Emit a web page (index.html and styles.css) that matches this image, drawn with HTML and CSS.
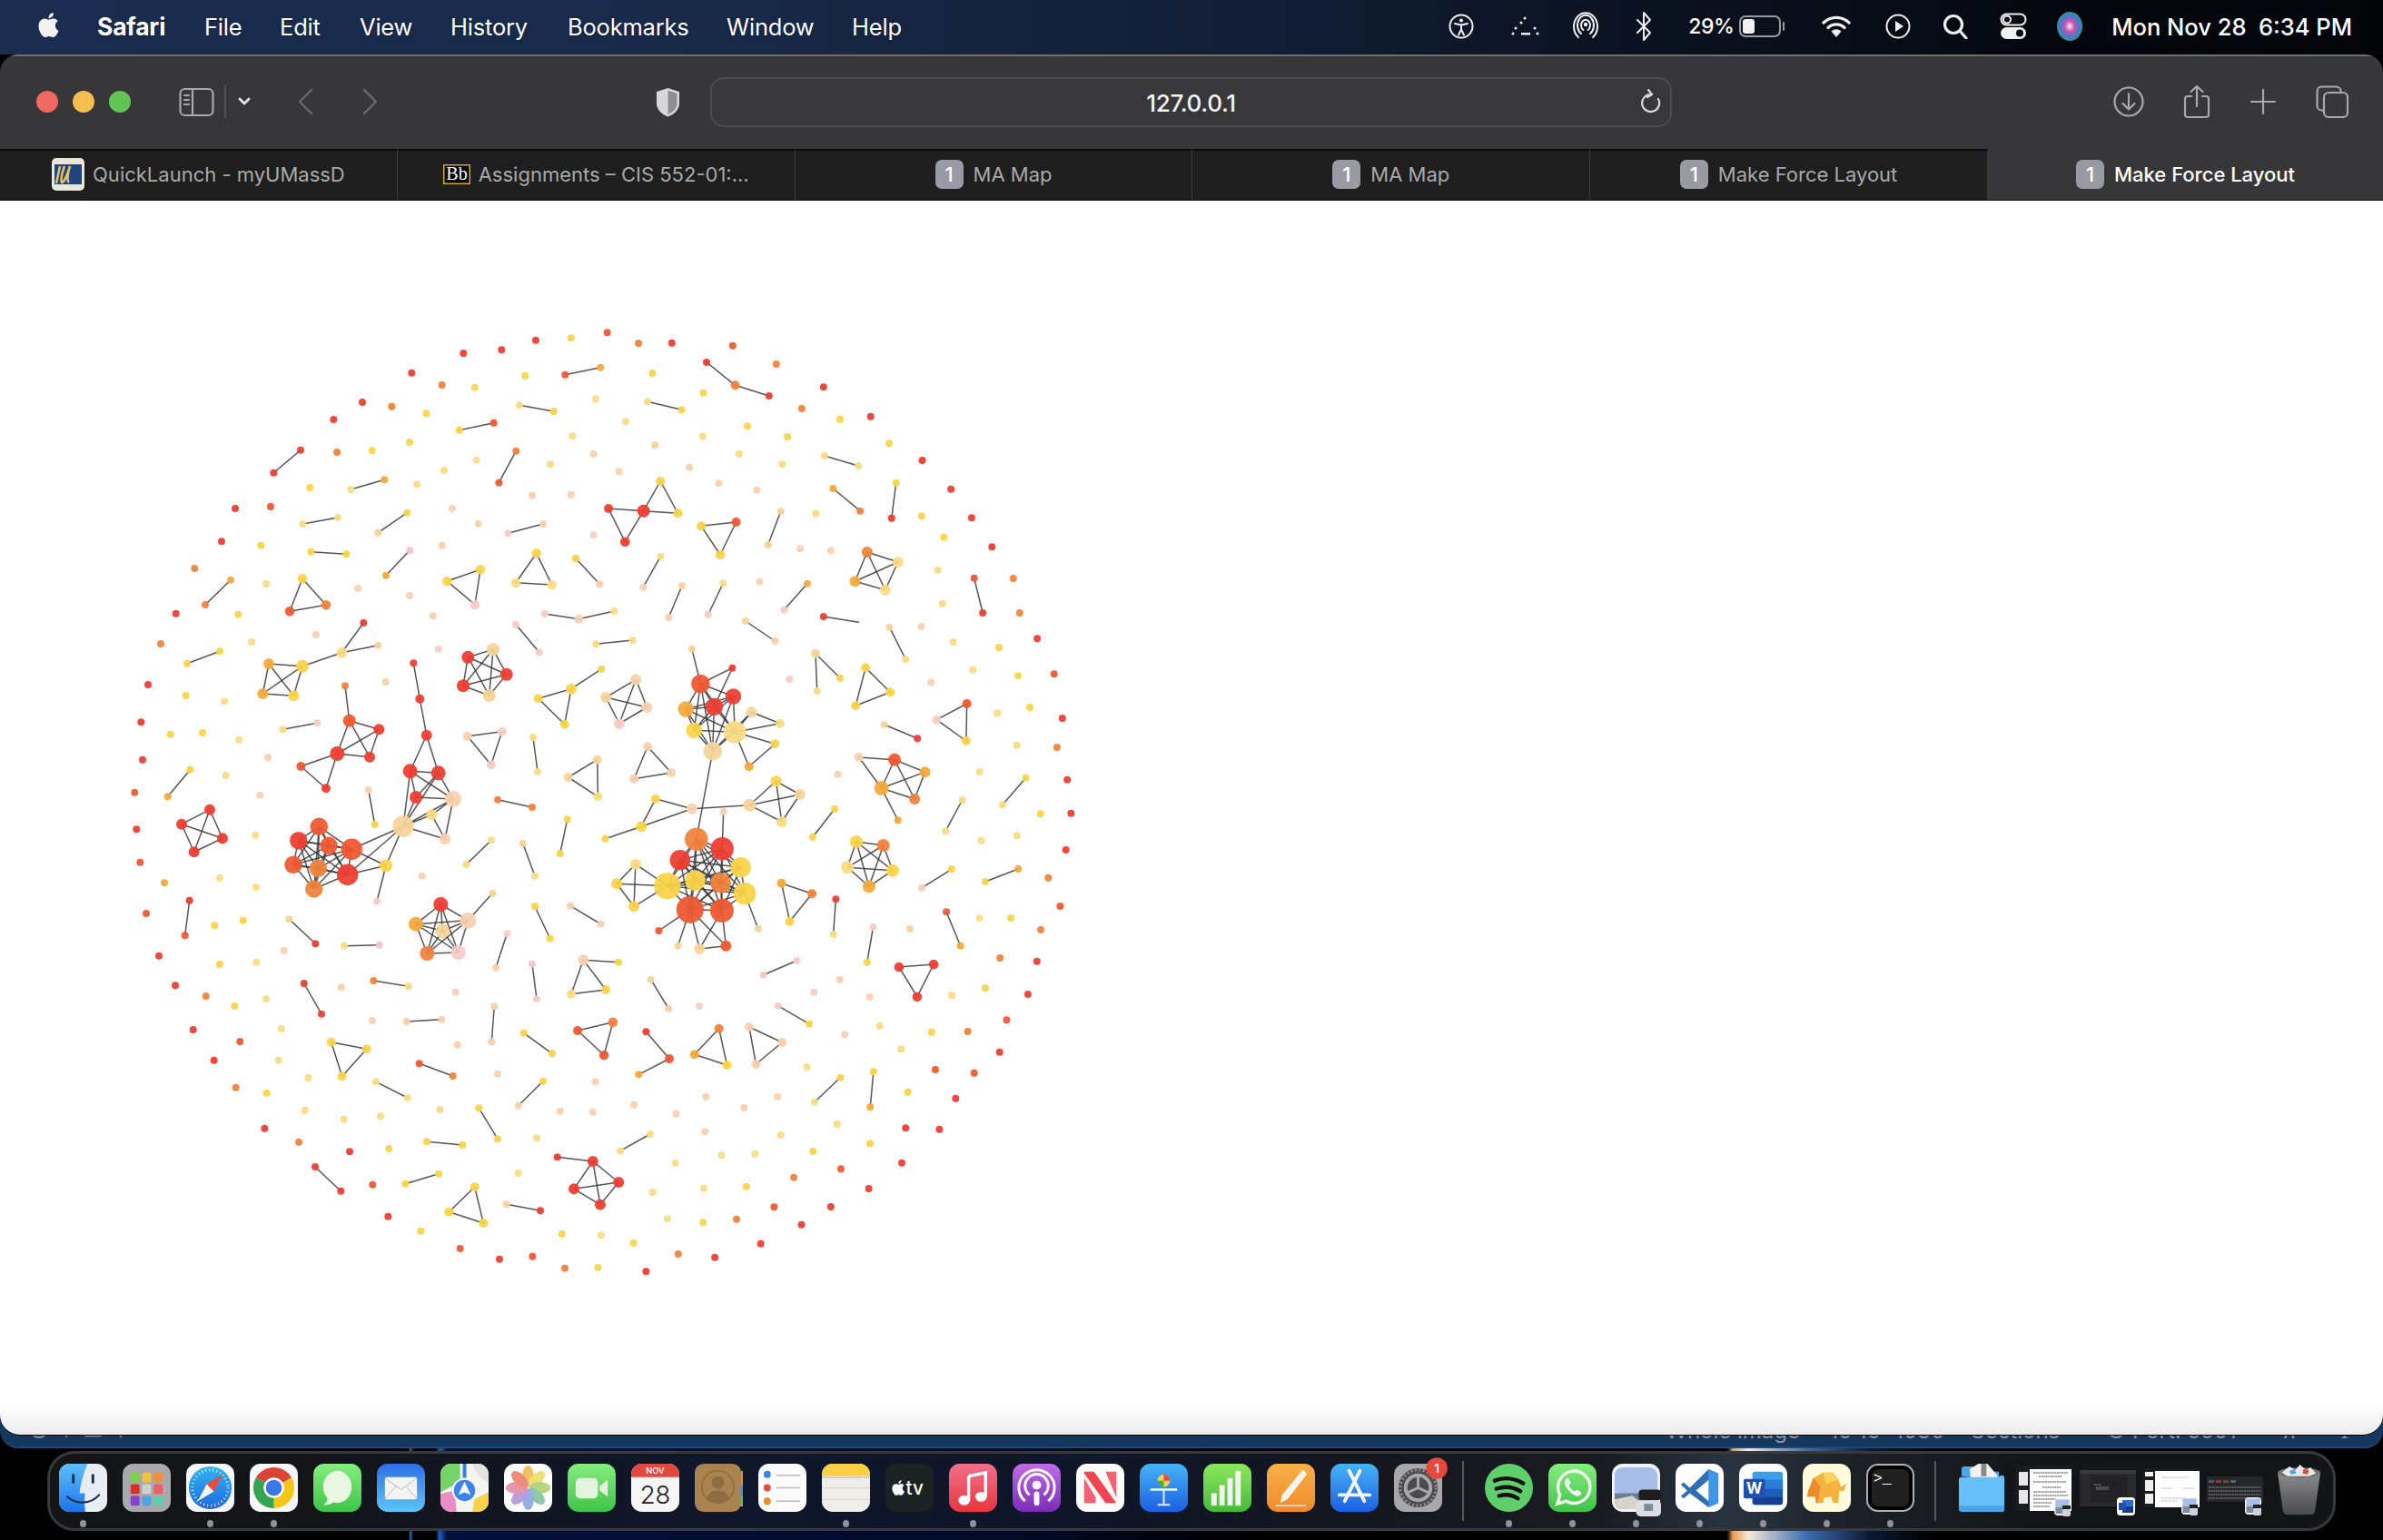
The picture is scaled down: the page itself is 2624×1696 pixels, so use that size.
FILE: index.html
```html
<!DOCTYPE html>
<html lang="en">
<head>
<meta charset="utf-8">
<title>Make Force Layout</title>
<link rel="stylesheet" href="styles.css">
</head>
<body>
<svg class="defs" aria-hidden="true">
  <defs>
    <linearGradient id="gFinder" x1="0" y1="0" x2="0" y2="1"><stop offset="0" stop-color="#5cc0fa"/><stop offset="1" stop-color="#1f74ea"/></linearGradient>
    <linearGradient id="gGreen" x1="0" y1="0" x2="0" y2="1"><stop offset="0" stop-color="#84ef7e"/><stop offset="1" stop-color="#3fc348"/></linearGradient>
    <linearGradient id="gMail" x1="0" y1="0" x2="0" y2="1"><stop offset="0" stop-color="#2f6fe6"/><stop offset="1" stop-color="#5cc6f8"/></linearGradient>
    <linearGradient id="gSafari" x1="0" y1="0" x2="0" y2="1"><stop offset="0" stop-color="#2fb6f2"/><stop offset="1" stop-color="#2168dc"/></linearGradient>
    <linearGradient id="gMusic" x1="0" y1="0" x2="0" y2="1"><stop offset="0" stop-color="#f2708a"/><stop offset="1" stop-color="#e8363f"/></linearGradient>
    <linearGradient id="gPod" x1="0" y1="0" x2="0" y2="1"><stop offset="0" stop-color="#c26bea"/><stop offset="1" stop-color="#7a2cb8"/></linearGradient>
    <linearGradient id="gBlue" x1="0" y1="0" x2="0" y2="1"><stop offset="0" stop-color="#45b4f8"/><stop offset="1" stop-color="#1c5fe0"/></linearGradient>
    <linearGradient id="gNum" x1="0" y1="0" x2="0" y2="1"><stop offset="0" stop-color="#8ce85c"/><stop offset="1" stop-color="#48b83a"/></linearGradient>
    <linearGradient id="gPages" x1="0" y1="0" x2="0" y2="1"><stop offset="0" stop-color="#f8b048"/><stop offset="1" stop-color="#f08a2a"/></linearGradient>
    <linearGradient id="gTrash" x1="0" y1="0" x2="0" y2="1"><stop offset="0" stop-color="#8c8c8e"/><stop offset="1" stop-color="#4a4a4c"/></linearGradient>
    <radialGradient id="gSiri" cx=".5" cy=".5" r=".55"><stop offset="0" stop-color="#f4f0ff"/><stop offset=".35" stop-color="#d04fa8"/><stop offset=".7" stop-color="#3b7fd0"/><stop offset="1" stop-color="#35a070"/></radialGradient>
    <symbol id="miniPrev" viewBox="0 0 20 20">
      <rect x="1" y="0" width="18" height="19" rx="4" fill="#f2f2f2"/>
      <rect x="2.500" y="1.500" width="15" height="12" fill="#a9bfe8"/>
      <rect x="2.500" y="10" width="15" height="7" fill="#7d8b9c"/>
      <rect x="10" y="8" width="9" height="4" fill="#222"/>
      <rect x="10" y="12" width="9" height="8" rx="2" fill="#cfd3d8"/>
    </symbol>
    <symbol id="miniWord" viewBox="0 0 20 20">
      <rect x="0" y="0" width="20" height="20" rx="4" fill="#fff"/>
      <rect x="6" y="3" width="12" height="14" fill="#2a6dd0"/>
      <rect x="6" y="10" width="12" height="7" fill="#17398f"/>
      <rect x="2" y="6" width="8" height="8" fill="#1f4fb0"/>
    </symbol>
  </defs>
</svg>

<header class="menubar">
  <nav class="menu">
    <svg class="apple" viewBox="0 0 24 24"><path d="M12.152 6.896c-.948 0-2.415-1.078-3.96-1.04-2.04.027-3.91 1.183-4.961 3.014-2.117 3.675-.546 9.103 1.519 12.09 1.013 1.454 2.208 3.09 3.792 3.039 1.52-.065 2.09-.987 3.935-.987 1.831 0 2.35.987 3.96.948 1.637-.026 2.676-1.48 3.676-2.948 1.156-1.688 1.636-3.325 1.662-3.415-.039-.013-3.182-1.221-3.22-4.857-.026-3.04 2.48-4.494 2.597-4.559-1.429-2.09-3.623-2.324-4.39-2.376-2-.156-3.675 1.09-4.61 1.09zM15.53 3.83c.843-1.012 1.4-2.427 1.245-3.83-1.207.052-2.662.805-3.532 1.818-.78.896-1.454 2.338-1.273 3.714 1.338.104 2.715-.688 3.559-1.701"/></svg>
    <b class="app">Safari</b><span>File</span><span>Edit</span><span>View</span><span>History</span><span>Bookmarks</span><span>Window</span><span>Help</span>
  </nav>
  <div class="status">
    <svg class="si" width="28" height="28" viewBox="0 0 28 28"><circle cx="14" cy="14" r="12.500"/><circle class="f" cx="14" cy="7.500" r="2"/><path d="M7 11l7 1.500 7-1.500M14 12.500v5l-3 6M14 17.500l3 6"/></svg>
    <svg class="si" width="34" height="24" viewBox="0 0 34 24"><g class="f"><circle cx="17" cy="3" r="1.500"/><circle cx="13" cy="8" r="1.500"/><circle cx="7" cy="14" r="1.500"/><circle cx="28" cy="14" r="1.500"/><circle cx="4" cy="20" r="1.500"/><circle cx="31" cy="20" r="1.500"/><rect x="13" y="19" width="10" height="2.500"/></g></svg>
    <svg class="si" width="30" height="34" viewBox="0 0 30 34"><path d="M7 29a13 15 0 1 1 16 0M10 25a9 11 0 1 1 10 0M12.500 21a5 6 0 1 1 5 0"/><circle class="f" cx="15" cy="15" r="2.200"/></svg>
    <svg class="si" width="18" height="34" viewBox="0 0 18 34"><path d="M2 10l14 14-7 8V2l7 8-14 14"/></svg>
    <span class="pct">29%</span>
    <svg class="si" width="52" height="24" viewBox="0 0 52 24"><rect class="dim" x="1" y="1" width="44" height="22" rx="6"/><rect class="f" x="4" y="4" width="13" height="16" rx="3"/><path class="dim" d="M49 8v8"/></svg>
    <svg class="si" width="34" height="28" viewBox="0 0 34 28"><path class="thick" d="M3 10a20 20 0 0 1 28 0M8 15.500a13 13 0 0 1 18 0"/><path class="f" d="M11.500 19.500a8 8 0 0 1 11 0L17 26z"/></svg>
    <svg class="si" width="28" height="28" viewBox="0 0 28 28"><circle cx="14" cy="14" r="12.500"/><path class="f" d="M11 8l9 6-9 6z"/></svg>
    <svg class="si" width="28" height="28" viewBox="0 0 28 28"><circle class="thick" cx="12" cy="12" r="9.500"/><path class="thick" d="M19 19l7 8"/></svg>
    <svg class="si" width="30" height="30" viewBox="0 0 30 30"><rect class="dim2" x="1.500" y="1.500" width="27" height="12" rx="6"/><circle cx="8" cy="7.500" r="4"/><rect class="f" x="1" y="16" width="28" height="13" rx="6.500"/><circle class="hole" cx="22" cy="22.500" r="4"/></svg>
    <svg class="siri" width="28" height="32" viewBox="0 0 28 32"><ellipse cx="14" cy="16" rx="14" ry="16" fill="url(#gSiri)"/></svg>
    <span class="clock">Mon Nov 28&nbsp;&nbsp;6:34 PM</span>
  </div>
</header>

<div class="window">
  <div class="toolbar">
    <div class="lights"><i class="red"></i><i class="amber"></i><i class="green"></i></div>
    <svg class="tb" width="54" height="36" viewBox="0 0 54 36"><rect x="1.500" y="4" width="36" height="29" rx="5"/><path d="M15 4v29M6 11h5M6 16h5M6 21h5"/><path class="thin" d="M51 0v36"/></svg>
    <svg class="tb" width="14" height="10" viewBox="0 0 14 10"><path class="bright" d="M2 2l5 5 5-5"/></svg>
    <svg class="tb faint" width="20" height="30" viewBox="0 0 20 30"><path d="M17 2L4 15l13 13"/></svg>
    <svg class="tb faint" width="20" height="30" viewBox="0 0 20 30"><path d="M3 2l13 13L3 28"/></svg>
    <svg class="shield" width="27" height="33" viewBox="0 0 27 33"><path d="M13.500 1L26 5v13c0 7-6 12-12.500 14.500C7 30 1 25 1 18V5z" fill="#d8d8d8"/><path d="M13.500 3.500L23.500 7v11c0 5.500-4.500 9.500-10 12z" fill="#8e8e90"/></svg>
    <div class="url"><span class="addr">127.0.0.1</span><svg class="tb reload" width="24" height="28" viewBox="0 0 24 28"><path d="M13 6a9.500 9.500 0 1 0 8 5M10 1l4 5-5 3"/></svg></div>
    <svg class="tb" width="34" height="34" viewBox="0 0 34 34"><circle cx="17" cy="17" r="15.500"/><path d="M17 8v17M10.500 19l6.500 6.500 6.500-6.500"/></svg>
    <svg class="tb" width="30" height="38" viewBox="0 0 30 38"><path d="M9 13H5a3 3 0 0 0-3 3v17a3 3 0 0 0 3 3h20a3 3 0 0 0 3-3V16a3 3 0 0 0-3-3h-4M15 24V2M8.500 8L15 2l6.500 6"/></svg>
    <svg class="tb" width="28" height="28" viewBox="0 0 28 28"><path d="M14 1v26M1 14h26"/></svg>
    <svg class="tb" width="36" height="36" viewBox="0 0 36 36"><rect x="1.500" y="1.500" width="26" height="26" rx="5"/><rect class="filled" x="9" y="8" width="26" height="27" rx="5"/></svg>
  </div>
  <div class="tabs">
    <div class="tab">
      <svg class="fav" width="36" height="36" viewBox="0 0 36 36"><rect width="36" height="36" rx="5" fill="#eae6d8"/><rect x="3" y="7" width="30" height="22" fill="#1f4480"/><path d="M9 9L5 28M14 9c-2 6-5 14-3 18 2 1 6-8 9-18-2 6-4 16-1 18" fill="none" stroke="#e8c25a" stroke-width="2.500"/></svg>
      <span>QuickLaunch - myUMassD</span>
    </div>
    <div class="tab">
      <svg class="fav" width="30" height="22" viewBox="0 0 30 22"><rect x=".75" y=".75" width="28.500" height="20.500" fill="#000" stroke="#d9a92e" stroke-width="1.500"/><text x="15" y="17" class="bb">Bb</text></svg>
      <span>Assignments – CIS 552-01:...</span>
    </div>
    <div class="tab"><b class="badge">1</b><span>MA Map</span></div>
    <div class="tab"><b class="badge">1</b><span>MA Map</span></div>
    <div class="tab"><b class="badge">1</b><span>Make Force Layout</span></div>
    <div class="tab active"><b class="badge">1</b><span>Make Force Layout</span></div>
  </div>
  <main class="page">
    <svg id="graph" class="graph" width="1300" height="1359" viewBox="0 221 1300 1359"></svg>
  </main>
</div>

<div class="backwin">
  <span class="bw-left">○ ▾ ▭ ▾</span>
  <div class="bw-right">
    <span>Whole image</span><span>16 16x1080</span><span>Sections</span><span>○ Port: 5501</span><span>∧</span><span>♠</span>
  </div>
</div>

<div class="desk">
  <nav class="dock">
    <div class="slot"><svg class="ic" viewBox="0 0 54 54"><rect width="54" height="54" rx="12" fill="#e8edf3"/><path d="M12 0h20c-5 12-8 23-9 33h6c-.5 7-.5 14 .5 21H12A12 12 0 0 1 0 42V12A12 12 0 0 1 12 0z" fill="url(#gFinder)"/><path d="M16 13v8M38 13v8" stroke="#1c2c48" stroke-width="3" stroke-linecap="round"/><path d="M9 37c10 9 26 9 36-2" fill="none" stroke="#1c2c48" stroke-width="2.200" stroke-linecap="round"/></svg><i class="dot"></i></div>
    <div class="slot"><svg class="ic" viewBox="0 0 54 54"><rect width="54" height="54" rx="12" fill="#a9a9ad"/><g><rect x="9" y="10" width="10" height="11" rx="2" fill="#7bd34d"/><rect x="22" y="10" width="10" height="11" rx="2" fill="#f5c33b"/><rect x="35" y="10" width="10" height="11" rx="2" fill="#f0903a"/><rect x="9" y="23" width="10" height="11" rx="2" fill="#d6322b"/><rect x="22" y="23" width="10" height="11" rx="2" fill="#cfcfcf"/><rect x="35" y="23" width="10" height="11" rx="2" fill="#ea5f6d"/><rect x="9" y="36" width="10" height="11" rx="2" fill="#8a3fd0"/><rect x="22" y="36" width="10" height="11" rx="2" fill="#4aa6e8"/><rect x="35" y="36" width="10" height="11" rx="2" fill="#5fd0a8"/></g></svg></div>
    <div class="slot"><svg class="ic" viewBox="0 0 54 54"><rect width="54" height="54" rx="12" fill="#f5f5f5"/><circle cx="27" cy="27" r="24" fill="url(#gSafari)"/><circle cx="27" cy="27" r="20" fill="none" stroke="#dff0fc" stroke-width="3" stroke-dasharray="1 3.200"/><path d="M41 12L23 23l8 8z" fill="#ef4a3a"/><path d="M13 42l10-19 8 8z" fill="#f5f5f5"/></svg><i class="dot"></i></div>
    <div class="slot"><svg class="ic" viewBox="0 0 54 54"><rect width="54" height="54" rx="12" fill="#f7f7f7"/><path d="M27 27L7.100 15.500A23 23 0 0 1 46.900 15.500z" fill="#db4437"/><path d="M27 27L46.900 15.500A23 23 0 0 1 27 50z" fill="#f5c518"/><path d="M27 27L27 50A23 23 0 0 1 7.100 15.500z" fill="#34a450"/><circle cx="27" cy="27" r="11.500" fill="#fff"/><circle cx="27" cy="27" r="9" fill="#3b78e7"/></svg><i class="dot"></i></div>
    <div class="slot"><svg class="ic" viewBox="0 0 54 54"><rect width="54" height="54" rx="12" fill="url(#gGreen)"/><ellipse cx="27" cy="26" rx="16" ry="18" fill="#e8f6e2"/><path d="M16 38c0 4-2 7-5 8 5 1 10-1 13-4z" fill="#e8f6e2"/></svg></div>
    <div class="slot"><svg class="ic" viewBox="0 0 54 54"><rect width="54" height="54" rx="12" fill="url(#gMail)"/><rect x="9" y="15" width="36" height="25" rx="2" fill="#f4f4f4"/><path d="M9 16l18 13 18-13M9 39l13-14M45 39L32 25" fill="none" stroke="#b8b8b8" stroke-width="1"/></svg></div>
    <div class="slot"><svg class="ic" viewBox="0 0 54 54"><rect width="54" height="54" rx="12" fill="#f5f5f0"/><path d="M0 12A12 12 0 0 1 12 0h10v20L0 32z" fill="#74d46a"/><path d="M36 0h6a12 12 0 0 1 12 12v10C44 16 38 10 36 0z" fill="#e4e4e4"/><path d="M0 34l16-4 2 24h-6A12 12 0 0 1 0 42z" fill="#e88ec4"/><path d="M38 40l16-8v10a12 12 0 0 1-12 12h-6z" fill="#f7d24a"/><path d="M27 0v16" stroke="#3a7de0" stroke-width="4"/><circle cx="27" cy="30" r="13" fill="#3d85e8" stroke="#fff" stroke-width="2"/><path d="M27 20l7 15-7-3-7 3z" fill="#fff"/></svg></div>
    <div class="slot"><svg class="ic" viewBox="0 0 54 54"><rect width="54" height="54" rx="12" fill="#fff"/><g class="petals"><ellipse cx="27" cy="14" rx="6.500" ry="12" fill="#f2a72c"/><ellipse cx="27" cy="14" rx="6.500" ry="12" fill="#e9d53a" transform="rotate(45 27 27)"/><ellipse cx="27" cy="14" rx="6.500" ry="12" fill="#9cc64a" transform="rotate(90 27 27)"/><ellipse cx="27" cy="14" rx="6.500" ry="12" fill="#5fb88a" transform="rotate(135 27 27)"/><ellipse cx="27" cy="14" rx="6.500" ry="12" fill="#6f90d8" transform="rotate(180 27 27)"/><ellipse cx="27" cy="14" rx="6.500" ry="12" fill="#9c7cd0" transform="rotate(225 27 27)"/><ellipse cx="27" cy="14" rx="6.500" ry="12" fill="#dc6f8c" transform="rotate(270 27 27)"/><ellipse cx="27" cy="14" rx="6.500" ry="12" fill="#e8624a" transform="rotate(315 27 27)"/></g></svg></div>
    <div class="slot"><svg class="ic" viewBox="0 0 54 54"><rect width="54" height="54" rx="12" fill="url(#gGreen)"/><rect x="9" y="16" width="25" height="23" rx="5" fill="#e6f2e0"/><path d="M36 25l9-7v19l-9-7z" fill="#e6f2e0"/></svg></div>
    <div class="slot"><svg class="ic" viewBox="0 0 54 54"><rect width="54" height="54" rx="12" fill="#f6f6f6"/><path d="M0 15V12A12 12 0 0 1 12 0h30a12 12 0 0 1 12 12v3z" fill="#e2483d"/><text x="27" y="11.500" class="cal-m">NOV</text><text x="27" y="45" class="cal-d">28</text></svg></div>
    <div class="slot"><svg class="ic" viewBox="0 0 54 54"><rect x="48" y="8" width="6" height="40" fill="#5dc46a"/><rect x="48" y="10" width="6" height="14" fill="#eb8b2e"/><rect x="48" y="24" width="6" height="12" fill="#4a90d8"/><rect width="52" height="54" rx="10" fill="#a98450"/><circle cx="26" cy="26" r="18" fill="none" stroke="#8c6c40" stroke-width="1.500"/><circle cx="26" cy="21" r="7" fill="#8c6c40"/><path d="M13 39c3-7 8-9 13-9s10 2 13 9c-7 6-19 6-26 0z" fill="#8c6c40"/></svg></div>
    <div class="slot"><svg class="ic" viewBox="0 0 54 54"><rect width="54" height="54" rx="12" fill="#fbfbfb"/><circle cx="10" cy="12" r="4" fill="#3a82e6"/><circle cx="10" cy="27" r="4" fill="#e64a3c"/><circle cx="10" cy="42" r="4" fill="#ee8a25"/><path d="M20 13h27M20 27h27M20 42h27" stroke="#bbb" stroke-width="1.500"/></svg></div>
    <div class="slot"><svg class="ic" viewBox="0 0 54 54"><rect width="54" height="54" rx="12" fill="#efeee9"/><path d="M0 14V12A12 12 0 0 1 12 0h30a12 12 0 0 1 12 12v2z" fill="#fbcf45"/><path d="M0 15.500h54" stroke="#a8a8a0" stroke-width="1.500" stroke-dasharray="1 1"/><path d="M0 27h54M0 40h54" stroke="#dcdbd4" stroke-width="1.500"/></svg><i class="dot"></i></div>
    <div class="slot"><svg class="ic" viewBox="0 0 54 54"><rect width="54" height="54" rx="12" fill="#1b2422"/><svg x="6" y="17" width="17" height="20" viewBox="0 0 24 24"><path fill="#fff" d="M12.152 6.896c-.948 0-2.415-1.078-3.96-1.04-2.04.027-3.91 1.183-4.961 3.014-2.117 3.675-.546 9.103 1.519 12.09 1.013 1.454 2.208 3.09 3.792 3.039 1.52-.065 2.09-.987 3.935-.987 1.831 0 2.35.987 3.96.948 1.637-.026 2.676-1.48 3.676-2.948 1.156-1.688 1.636-3.325 1.662-3.415-.039-.013-3.182-1.221-3.22-4.857-.026-3.04 2.48-4.494 2.597-4.559-1.429-2.09-3.623-2.324-4.39-2.376-2-.156-3.675 1.09-4.61 1.09zM15.53 3.83c.843-1.012 1.4-2.427 1.245-3.83-1.207.052-2.662.805-3.532 1.818-.78.896-1.454 2.338-1.273 3.714 1.338.104 2.715-.688 3.559-1.701"/></svg><text x="23" y="35" class="tv">tv</text></svg></div>
    <div class="slot"><svg class="ic" viewBox="0 0 54 54"><rect width="54" height="54" rx="12" fill="url(#gMusic)"/><path d="M22 14l19-4v26" fill="none" stroke="#fff" stroke-width="3.500"/><path d="M22 14v27" stroke="#fff" stroke-width="3.500"/><ellipse cx="17" cy="41" rx="6.500" ry="5.500" fill="#fff"/><ellipse cx="36" cy="37" rx="6.500" ry="5.500" fill="#fff"/></svg><i class="dot"></i></div>
    <div class="slot"><svg class="ic" viewBox="0 0 54 54"><rect width="54" height="54" rx="12" fill="url(#gPod)"/><g fill="none" stroke="#fff" stroke-width="3"><path d="M14 42a20 20 0 1 1 26 0"/><path d="M19 35a13 13 0 1 1 16 0"/></g><circle cx="27" cy="24" r="5" fill="#fff"/><rect x="24" y="31" width="6" height="16" rx="3" fill="#fff"/></svg></div>
    <div class="slot"><svg class="ic" viewBox="0 0 54 54"><rect width="54" height="54" rx="12" fill="#fbfbfb"/><path d="M9 16l13 22v6H9zM33 9h12v29z" fill="#f0636f"/><path d="M9 9h11l25 35H33L9 11z" fill="#f04452"/></svg></div>
    <div class="slot"><svg class="ic" viewBox="0 0 54 54"><rect width="54" height="54" rx="12" fill="url(#gBlue)"/><path d="M12 29h30" stroke="#fff" stroke-width="2.500"/><circle cx="27" cy="19" r="7" fill="#f2d24a"/><path d="M27 12a7 7 0 0 1 7 7h-7z" fill="#e04d4d"/><path d="M20 19a7 7 0 0 0 7 7v-7z" fill="#43b04a"/><path d="M27 30v16M20 46h14" stroke="#e8eef8" stroke-width="2"/></svg></div>
    <div class="slot"><svg class="ic" viewBox="0 0 54 54"><rect width="54" height="54" rx="12" fill="url(#gNum)"/><g fill="#f2f2ee"><rect x="9" y="33" width="6" height="14"/><rect x="18" y="24" width="6" height="23"/><rect x="27" y="16" width="6" height="31"/><rect x="36" y="8" width="6" height="39"/></g></svg></div>
    <div class="slot"><svg class="ic" viewBox="0 0 54 54"><rect width="54" height="54" rx="12" fill="url(#gPages)"/><path d="M40 7c3 1 5 4 4 6L23 40l-8 4 2-9z" fill="#f8f4ec"/><path d="M10 47h34" stroke="#f8f4ec" stroke-width="1.500"/></svg></div>
    <div class="slot"><svg class="ic" viewBox="0 0 54 54"><rect width="54" height="54" rx="12" fill="url(#gBlue)"/><path d="M21 8l17 34M33 8L16 42M10 35h34" stroke="#f4f4f4" stroke-width="4" stroke-linecap="round" fill="none"/></svg></div>
    <div class="slot"><svg class="ic" viewBox="0 0 54 54"><rect width="54" height="54" rx="12" fill="#a8a8aa"/><circle cx="27" cy="27" r="22" fill="#4c4c4e"/><circle cx="27" cy="27" r="20" fill="none" stroke="#909092" stroke-width="3" stroke-dasharray="2 2.500"/><circle cx="27" cy="27" r="14" fill="none" stroke="#a8a8aa" stroke-width="4"/><path d="M27 13v14M14 33l13-6M40 33l-13-6" stroke="#a8a8aa" stroke-width="3"/><circle cx="48" cy="5" r="12" fill="#e5483c"/><text x="48" y="10" class="count">1</text></svg></div>
    <i class="sep"></i>
    <div class="slot"><svg class="ic" viewBox="0 0 54 54"><circle cx="27" cy="27" r="27" fill="#5fcf6c"/><path d="M11 19c10-4 22-3 32 3M13 28c9-3 19-2 27 3M16 36c7-2 15-1 21 3" fill="none" stroke="#111" stroke-width="4.500" stroke-linecap="round"/></svg><i class="dot"></i></div>
    <div class="slot"><svg class="ic" viewBox="0 0 54 54"><rect width="54" height="54" rx="12" fill="url(#gGreen)"/><path d="M10 45l3-10a18 18 0 1 1 7 7z" fill="none" stroke="#f4f8f0" stroke-width="3.500"/><path d="M20 17c-3 3-2 7 2 12s9 8 12 7 3-3 3-4l-5-3-2 2c-2 0-7-5-7-7l2-2-2-5c-1-1-2-1-3 0z" fill="#f4f8f0"/></svg><i class="dot"></i></div>
    <div class="slot"><svg class="ic" viewBox="0 0 54 54"><rect width="54" height="54" rx="12" fill="#f2f2f2"/><rect x="3" y="4" width="48" height="47" rx="9" fill="#a8bee8"/><path d="M3 33h48v9a9 9 0 0 1-9 9H12a9 9 0 0 1-9-9z" fill="#6d7f96"/><path d="M3 40l20-4 10 8 18-5v3a9 9 0 0 1-9 9H12a9 9 0 0 1-9-9z" fill="#d8d4c8"/><rect x="30" y="29" width="25" height="12" rx="4" fill="#1e1e20"/><rect x="27" y="41" width="28" height="18" rx="5" fill="#dcdfe2"/><rect x="36" y="45" width="10" height="8" fill="#7c8a9c"/></svg><i class="dot"></i></div>
    <div class="slot"><svg class="ic" viewBox="0 0 54 54"><rect width="54" height="54" rx="12" fill="#fff"/><path d="M37 6L16 27l-7-6-3 2.500L13 30l-7 6.500L9 39l7-6 21 16 11-5V11z" fill="#2f6fb8"/><path d="M37 6l11 5v33l-11 5z" fill="#3f95e8"/><path d="M37 18v24L23 30z" fill="#fff"/><path d="M37 6v12L23 30l14 12v7" fill="none"/></svg><i class="dot"></i></div>
    <div class="slot"><svg class="ic" viewBox="0 0 54 54"><rect width="54" height="54" rx="12" fill="#fff"/><rect x="15" y="9" width="34" height="37" rx="3" fill="#3aa0ea"/><rect x="15" y="18" width="34" height="10" fill="#2a7cd8"/><rect x="15" y="28" width="34" height="9" fill="#1d5cb8"/><path d="M15 37h34v6a3 3 0 0 1-3 3H18a3 3 0 0 1-3-3z" fill="#173f92"/><rect x="5" y="17" width="24" height="22" rx="2" fill="#1f4fb0"/><text x="17" y="34" class="w">W</text></svg><i class="dot"></i></div>
    <div class="slot"><svg class="ic" viewBox="0 0 54 54"><rect width="54" height="54" rx="12" fill="#fdfbdc"/><path d="M6 31l6-15 11-6 11 0 6 8 3 8 6-4-3 9-5-1-1 14h-6l-2-7-8 1-1 6H15l-1-7H5z" fill="#f6b23e"/><path d="M6 31l6-15 8 10-3 18h-2l-1-7H5z" fill="#ee8a2e"/><path d="M23 10l11 0 6 8-14 5z" fill="#fbd35a"/></svg><i class="dot"></i></div>
    <div class="slot"><svg class="ic" viewBox="0 0 54 54"><rect x="1" y="1" width="52" height="52" rx="12" fill="#000" stroke="#aeb2b6" stroke-width="2"/><rect x="6" y="6" width="42" height="42" rx="7" fill="#202020"/><text x="8" y="21" class="term">&gt;_</text></svg><i class="dot"></i></div>
    <i class="sep"></i>
    <div class="slot"><svg class="ic" viewBox="0 0 54 54"><path d="M5 14V6a3 3 0 0 1 3-3h10l5 6h24v10z" fill="#4aa8ec"/><path d="M14 6L24 0h10l12 14-8 8H16z" fill="#f2f2f2"/><rect x="27" y="0" width="6" height="14" fill="#8a8a8a"/><path d="M2 18a3 3 0 0 1 3-3h40l5-2a3 3 0 0 1 3 3v35a3 3 0 0 1-3 3H6a4 4 0 0 1-4-4z" fill="#68c0f8"/><path d="M2 50v-3h51v4a3 3 0 0 1-3 3H6a4 4 0 0 1-4-4z" fill="#4ba4e4"/></svg></div>
    <div class="slot"><svg class="thumb" viewBox="0 0 70 60"><rect x="4" y="2" width="61" height="50" fill="#1c1c1e"/><rect x="19" y="6" width="46" height="46" fill="#fff"/><rect x="7" y="9" width="10" height="15" fill="#e8e8e8"/><rect x="7" y="29" width="10" height="15" fill="#e8e8e8"/><path class="txt" d="M23 10h38M29 14h26M23 20h36M33 26h20M23 31h36M23 35h38M23 39h38M23 43h20M23 47h18"/><use href="#miniPrev" x="45" y="38" width="20" height="20"/></svg></div>
    <div class="slot"><svg class="thumb" viewBox="0 0 70 60"><rect x="4" y="7" width="62" height="40" fill="#2a2a2c"/><rect x="4" y="7" width="62" height="4" fill="#3a3a3c"/><rect x="15" y="13" width="42" height="30" fill="#232325"/><path class="txt lt" d="M20 23h8M22 26h14M22 28h14"/><use href="#miniWord" x="45" y="37" width="20" height="20"/></svg></div>
    <div class="slot"><svg class="thumb" viewBox="0 0 70 60"><rect x="4" y="5" width="62" height="43" fill="#1c1c1e"/><rect x="17" y="8" width="49" height="40" fill="#fff"/><rect x="6" y="9" width="9" height="5" fill="#eee"/><rect x="6" y="18" width="9" height="12" fill="#eee"/><rect x="6" y="33" width="9" height="11" fill="#eee"/><path class="txt gr" d="M24 15h30M24 27h12M48 27h12M24 38h30M24 41h18"/><use href="#miniPrev" x="45" y="37" width="20" height="20"/></svg></div>
    <div class="slot"><svg class="thumb" viewBox="0 0 70 60"><rect x="4" y="14" width="62" height="28" fill="#26272a"/><rect x="6" y="18" width="6" height="3" fill="#556"/><rect x="14" y="18" width="6" height="3" fill="#744"/><rect x="22" y="18" width="6" height="3" fill="#744"/><rect x="30" y="18" width="6" height="3" fill="#566"/><path class="txt lt" d="M6 26h58M6 30h58M6 34h58M6 38h58"/><use href="#miniPrev" x="45" y="37" width="20" height="20"/></svg></div>
    <div class="slot"><svg class="ic trash" viewBox="0 0 54 58"><path d="M3 10h48l-6 43a5 5 0 0 1-5 4H14a5 5 0 0 1-5-4z" fill="url(#gTrash)"/><ellipse cx="27" cy="10" rx="24" ry="6" fill="#70706f"/><path d="M8 10l8-7 7 4 5-6 7 6 5-3 6 7-8 3H14z" fill="#e8e8e8"/><path d="M16 8l6-2 2 5-6 1z" fill="#4aa6e0"/><path d="M32 6l6 1-1 5-6-1z" fill="#d0503f"/></svg></div>
  </nav>
</div>
<script src="graph.js"></script>
</body>
</html>
```
FILE: styles.css
```css
* { box-sizing: border-box; }
html, body { margin: 0; padding: 0; }
body {
  width: 2624px; height: 1696px; overflow: hidden; background: #000;
  font-family: Inter, "Liberation Sans", sans-serif; color: #fff;
  display: flex; flex-direction: column;
}
.defs { width: 0; height: 0; flex: none; }

/* menu bar */
.menubar {
  height: 60px; flex: none; display: flex; justify-content: space-between; align-items: center;
  padding: 0 0 2px 40px;
  background: linear-gradient(90deg, #1a2d50 0%, #182948 30%, #121e36 52%, #0c1424 66%, #05080f 85%, #030509 100%);
  font-size: 25.500px; letter-spacing: -.2px;
  text-shadow: 0 1px 2px rgba(0,0,0,.4);
}
.menu { display: grid; grid-template-columns: 67px 118px 83px 88px 100px 129px 175px 138px auto; align-items: center; }
.apple { width: 27px; height: 31px; fill: #f2f2f2; margin-top: -3px; }
.app { font-weight: 700; font-size: 26.500px; }
.status {
  display: grid; align-items: center; justify-items: start;
  grid-template-columns: 67px 69px 70px 58px 56px 90px 71px 63px 63px 63px 60px auto;
  padding-right: 34px;
}
.si { fill: none; stroke: #f0f0f0; stroke-width: 2; stroke-linecap: round; stroke-linejoin: round; }
.si .f { fill: #f0f0f0; stroke: none; }
.si .thick { stroke-width: 3.200; }
.si .dim { stroke: #9a9a9a; }
.si .dim2 { stroke: #f0f0f0; }
.si .hole { fill: #0a0c12; stroke: none; }
.pct { font-size: 23px; font-weight: 500; letter-spacing: -.5px; }
.clock { font-size: 25.500px; font-weight: 500; white-space: nowrap; letter-spacing: 0; }

/* browser window */
.window {
  flex: none; height: 1520px; display: flex; flex-direction: column; position: relative; z-index: 1;
  border-radius: 20px 20px 22px 22px; overflow: hidden; box-shadow: 0 1px 0 #000;
}
.toolbar {
  height: 104px; flex: none; background: #37373a; border-top: 2px solid #707073;
  display: grid; align-items: center; justify-items: start; padding: 0 0 2px 40px;
  grid-template-columns: 157px 65px 64px 72px 324px 60px 1545px 77px 74px 72px auto;
}
.lights { display: flex; gap: 16px; }
.lights i { width: 24px; height: 24px; border-radius: 50%; display: block; }
.lights .red { background: #ee6a5f; }
.lights .amber { background: #f5bd4f; }
.lights .green { background: #61c454; }
.tb { fill: none; stroke: #a9a9ab; stroke-width: 2.200; stroke-linecap: round; stroke-linejoin: round; }
.tb .thin { stroke: #5a5a5c; stroke-width: 1.500; }
.tb .bright { stroke: #e6e6e6; stroke-width: 2.800; }
.tb .filled { fill: #37373a; }
.tb.faint { stroke: #6d6d70; }
.url {
  width: 1059px; height: 55px; border: 2px solid #4c4c4f; border-radius: 15px; background: #38383b;
  display: grid; grid-template-columns: 1fr auto 1fr; align-items: center;
}
.addr { grid-column: 2; font-size: 26px; font-weight: 500; color: #f2f2f2; letter-spacing: -.3px; padding-top: 2px; }
.reload { grid-column: 3; justify-self: end; margin-right: 10px; stroke: #d8d8d8; }

.tabs {
  height: 57px; flex: none; display: grid; grid-template-columns: repeat(5, 437.800px) 1fr;
  background: #1e1e1f; font-size: 22px; color: #a9a9a9; border-bottom: 1px solid #111;
}
.tab {
  display: flex; align-items: center; justify-content: center; gap: 9px;
  border-top: 2px solid #0c0c0c; border-right: 1.500px solid #3c3c3e; padding-bottom: 2px;
}
.tab.active { background: #37373a; color: #fff; border: 0; font-weight: 500; padding-top: 2px; }
.badge {
  width: 31px; height: 32px; border-radius: 7px; background: #9a9aa5; color: #fff; font-weight: 500; font-size: 22px;
  display: flex; align-items: center; justify-content: center; margin-right: 2px;
}
.bb { font-family: "Liberation Serif", serif; font-size: 20px; fill: #fff; text-anchor: middle; }

.page {
  flex: 1; background: linear-gradient(#fff calc(100% - 34px), #ebebeb);
  min-height: 0;
}
.graph { display: block; }
.link { stroke: #383838; stroke-opacity: .85; stroke-width: 1.500; fill: none; stroke-linecap: round; stroke-linejoin: round; }
.node { fill-opacity: .94; }

/* window behind */
.backwin {
  flex: none; height: 55px; margin-top: -40px; padding: 22px 50px 0 32px;
  background: #15375e; border-bottom: 2px solid #1f4878; border-radius: 0 0 20px 20px;
  display: flex; justify-content: space-between; color: #8794a4; font-size: 24px; line-height: 28px;
}
.bw-left { letter-spacing: 3px; }
.bw-right { display: grid; grid-template-columns: 180px 156px 149px 193px 63px auto; margin-right: -14px; }

/* dock */
.desk {
  flex: 1; padding: 3px 0 0 52px; min-height: 0;
  background: linear-gradient(90deg, #000 0, #000 450px, #2f6ab0 452px, #000 455px, #000 480px, #1f5fc0 484px, #02103a 492px, #020a28 1100px, #000 1400px, #000 1902px, #e89a50 1908px, #f4e8d8 1925px, #3c6cae 1990px, #0a1830 2060px, #000 2130px);
}
.dock {
  width: 2520px; height: 88px; border: 3px solid #38393c; border-radius: 30px; padding: 11px 0 0 1px;
  display: flex; align-items: flex-start;
  background: linear-gradient(90deg, #141517 0, #13151a 12%, #10172a 28%, #10162a 44%, #14171e 58%, #191b20 68%, #2a3441 73.500%, #1c2027 79%, #141518 87%, #131416 100%);
}
.slot { width: 70px; flex: none; display: flex; flex-direction: column; align-items: center; }
.ic { width: 53px; height: 53px; display: block; overflow: visible; }
.ic.trash { height: 57px; }
.thumb { width: 70px; height: 60px; display: block; overflow: visible; }
.petals { opacity: .72; }
.txt { stroke: #444; stroke-width: 1; stroke-dasharray: 2 .6; fill: none; }
.txt.lt { stroke: #8e8e8e; }
.txt.gr { stroke: #bbb; }
.dot { width: 7px; height: 8px; border-radius: 50%; background: #8f9298; margin-top: 9px; display: block; }
.sep { width: 30px; flex: none; height: 66px; margin-top: -3px; display: flex; justify-content: center; }
.sep::before { content: ""; width: 2px; background: #55575b; }
.cal-m { font-size: 9.500px; fill: #fff; text-anchor: middle; font-weight: 500; }
.cal-d { font-family: Inter, sans-serif; font-size: 28px; font-weight: 300; fill: #222; text-anchor: middle; }
.tv { font-size: 21px; font-weight: 500; fill: #fff; }
.count { font-size: 14px; font-weight: 500; fill: #fff; text-anchor: middle; }
.w { font-size: 17px; font-weight: 700; fill: #fff; text-anchor: middle; }
.term { font-family: "Liberation Mono", monospace; font-size: 17px; fill: #fff; }
```
FILE: graph.js
```js
var COL = {r:'#ee3d31',s:'#ef5830',o:'#f2823a',a:'#f5aa3c',y:'#fad348',l:'#fbdc82',p:'#f9d0ad',k:'#f8cdc3',q:'#f6c6d2',t:'#f6d598'};
var NS = 'http://www.w3.org/2000/svg';
var svg = document.getElementById('graph');
var lines = [], dots = [];

/* Each region is a crop of the picture: origin and x scale; y scale is always 3. */
function Region(ox, oy, sx) {
  this.p = function (s) { var a = s.split(','); return [ox + a[0] / sx, oy + a[1] / 3]; };
}
Region.prototype.nodes = function (s) {
  s.trim().split(/\s+/).forEach(function (t) {
    var m = /^([a-z])(\d+),(\d+)(?:,(\d+))?$/.exec(t);
    var xy = this.p(m[2] + ',' + m[3]);
    dots.push([xy[0], xy[1], (m[4] ? +m[4] : 11) / 3 + 0.35, COL[m[1]]]);
  }, this);
};
Region.prototype.edges = function (s) {
  s.trim().split(/\s*;\s*/).forEach(function (path) {
    var pts = path.trim().split(/\s+/).map(this.p);
    for (var i = 1; i < pts.length; i++) lines.push([pts[i - 1], pts[i]]);
  }, this);
};
Region.prototype.clique = function (s) {
  var pts = s.trim().split(/\s+/).map(this.p);
  for (var i = 0; i < pts.length; i++) for (var j = i + 1; j < pts.length; j++) lines.push([pts[i], pts[j]]);
};
function abs(a) { for (var i = 1; i < a.length; i++) lines.push([a[i - 1], a[i]]); }

var A = new Region(130, 340, 3), B = new Region(650, 340, 2.851),
    C = new Region(130, 680, 3), D = new Region(650, 680, 2.851),
    E = new Region(130, 1040, 3), F = new Region(650, 1040, 2.851);

A.nodes('r1380,104 y1496,97 r1267,136 r1141,147 r970,212 o1070,252 y1178,260 y1345,222 s1477,218 r807,309 o904,323 y1018,346 l1326,319 y1439,339 y1127,401 s1241,377 r712,366 r603,467 r514,542 o723,474 y839,469 y963,441 l1501,421 o1315,470 l1184,500 l1077,534 l1428,514 y634,591 l769,597 a880,565 l987,580 s1258,575 r387,660 s504,654 p1104,660 p1368,617 p1496,614 l610,711 l726,690 y955,674 t859,740 p1190,710 k1288,742 p1404,711 r342,769 y472,782 y637,803 y754,811 q964,798 p1070,782 o253,858 a372,896 l489,909 y609,892,15 a885,881 y1197,862,15 y1087,900,15 y1382,808,15 l1314,905,15 l1433,912,15 y1512,825,12 p793,924 p963,948 k1179,978,15 s567,1000,15 o687,979,15 o288,978 r191,1007 y397,1010 p1040,1015 k1409,1008 p1522,1025,14');
A.edges('1326,319 1439,339;1127,401 1241,377;603,467 514,542;1315,470 1258,575;769,597 880,565;610,711 726,690;955,674 859,740;1288,742 1404,711;637,803 754,811;964,798 885,881;372,896 288,978;609,892 567,1000 687,979 609,892;1197,862 1087,900 1179,978 1197,862;1382,808 1314,905 1433,912 1382,808');
abs([[622.3,412.7],[661.2,404.7]]);
abs([[634,615],[660.2,643.3]]);
abs([[599.7,676],[637.3,681.7],[676.3,673]]);

B.nodes('s53,79 o151,114 r256,113 s447,122 a32,194 y195,213 r365,177 o584,183 o455,253,14 r561,288 r732,259 l17,298 l179,307 y287,334 y355,278 o664,330 y784,365 r880,356 l111,373 y493,388 l353,422 y619,423 t203,451 p10,479 l467,480 l603,514 l735,486 l841,519 y938,445 r1042,501 p90,538 p311,524 p403,577 p523,599 a762,594 y960,575 r1132,596 y220,570,14 r57,660,14 r167,668,20 y275,676,14 s458,705,14 y348,718,14 t598,669 l708,677 o847,668 r946,692 y1040,685 r1197,691 r109,770,15 y408,813,15 k10,748 t558,780 p659,793 p755,799 y1110,755 r1261,787 o869,804,17 l966,837,17 a831,901,17 l926,929,17 l221,818 p29,910 p166,920 p288,915 l417,907 p531,902 a681,908 l1091,864 s1205,890 o1328,891 k608,995 l1105,974 r1232,1005 o1348,1005 l75,999 r732,1017 k370,1010 p246,1020');
B.edges('365,177 455,253 561,288;179,307 287,334;735,486 841,519;762,594 847,668;960,575 946,692;57,660 167,668 275,676;220,570 167,668 109,770 57,660;220,570 275,676;348,718 458,705 408,813 348,718;598,669 558,780;869,804 966,837 926,929 831,901 869,804;869,804 926,929;966,837 831,901;221,818 166,920;288,915 246,1020;417,907 370,1010;681,908 608,995;1205,890 1232,1005;732,1017 842,1036');

C.nodes('o141,87 l441,81 p654,57 k1314,23 k1391,115 y336,112 y228,152 a498,153,17 y609,161,20 l739,116,17 t859,92 r811,18 k1058,104 p884,213 r976,151 o750,226 r99,222 y224,258 l351,277 a478,252,17 y580,259,17 r997,269,14 r1156,131,20 t1239,106,20 r1283,188,20 r1140,226,20 t1226,258,20 r76,346 y173,386 y279,381 l399,404 l544,370 k658,349 s764,341,20 r862,370,17 r724,450,23 r831,461,17 s604,492,14 r687,565,14 r81,470 p495,462 y238,503 l356,522 s55,578 a164,592 p469,587 p827,570 y848,684 r1019,389,17 r965,508,23 r1058,514,23 r984,594,20 p1107,600,26 l1036,652,17 t942,690,34 p1080,732,17 y1388,268,14 y1497,236,17 y1475,353,14 p1154,392,14 k1268,377,14 k1232,487,14 l1371,396 l1386,510 t1487,528,14 o1254,602 o1368,627 y1484,667 y1460,780 l1233,736 l1150,817 t1337,746 l1377,854 r303,635,17 r210,683,17 r345,730,17 r251,775,17 r61,700 s73,809 l454,719 l336,861 a153,877 l456,891 p1004,854 s664,691,28 r596,737,28 s696,754,28 s772,766,34 s579,817,28 o661,829,28 r758,850,34 o647,897,28 y885,820,20 k855,938 r236,935 s93,978 s221,1051 y319,1018 y413,1001 t565,997 r652,1078 k1285,1044 t1237,911 y1377,955 p1494,953 y1427,1061 r1066,948,23 a984,1013,23 p1156,1001,26 t1072,1036,23 o1021,1110,23 k1124,1107,23');
C.edges('336,112 228,152;498,153 609,161 580,259 478,252 498,153;498,153 580,259;609,161 478,252;609,161 739,116 859,92;739,116 811,18;750,226 764,341;764,341 862,370 831,461 724,450 764,341;764,341 831,461;862,370 724,450;724,450 604,492 687,565 724,450;544,370 658,349;976,151 997,269 1019,389 965,508;1019,389 1058,514;1107,600 1036,652 1080,732 942,690 1036,652;1107,600 1080,732;942,690 772,766;942,690 758,850;942,690 885,820;885,820 855,938;885,820 772,766;885,820 758,850;1314,23 1391,115;1388,268 1497,236 1475,353 1388,268;1154,392 1268,377 1232,487 1154,392;1371,396 1386,510;1254,602 1368,627;1484,667 1460,780;1233,736 1150,817;1337,746 1377,854;238,503 164,592;236,935 221,1051;565,997 652,1078;1377,955 1427,1061;1156,1001 1237,911;827,570 848,684');
C.clique('965,508 1058,514 984,594 1107,600 942,690');
C.clique('1156,131 1239,106 1283,188 1226,258 1140,226');
C.clique('303,635 210,683 251,775 345,730');
C.clique('664,691 596,737 696,754 772,766 579,817 661,829 758,850 647,897');
C.clique('1066,948 984,1013 1156,1001 1072,1036 1021,1110 1124,1107');
abs([[629,758.7],[662.6,736.7]]);
abs([[625.7,856],[657.7,836.7],[658.4,877.3],[625.7,856]]);
abs([[558.3,1028],[546,1065.7]]);
abs([[628,997.7],[661.6,1017.7]]);

D.nodes('t319,104 r446,167 s346,219,30 r449,261,25 a300,303,25 r389,295,28 t506,313,17 l596,350,14 y326,373,25 l454,379,36 t384,442,30 y580,418,14 a498,493,14 p143,205,17 t49,264,17 p178,297,17 k91,351,17 p180,427,14 p137,533,14 p254,513,14 t22,470,14 l24,592,14 l18,88 l133,75 y35,170 t487,12 p580,78 t707,119,14 y784,200 l712,243 k625,204 y864,166,14 y941,247,14 y833,292,14 t939,32 l990,138 p1039,30 l1139,81 y1283,99 r1403,70 l1201,173 y1343,193 s1456,187 p1069,215 s1182,285,14 k1087,338,14 y1180,408,14 l1278,316 y1380,297 r1482,333 l1339,422 o1465,429 t923,354 r1027,400 p843,462,14 s955,470,20 a1051,511,17 a914,564,23 o1018,600,17 a966,670 p777,518 l1222,510 y1367,530 l1294,619 r1497,536 y583,541,17 t658,585,17 t500,620,20 l601,675,17 p319,632,17 y205,599,14 y160,691,17 y47,731 p418,641 y767,633 y698,726 l1168,603 l1115,706 y1413,649 r1509,647 l1227,737 l1339,721 r1493,768 y1134,832 k1041,893 a1343,831 y1240,873 o1438,860 s1475,954 o333,733,37 r414,764,37 r282,802,33 y472,826,33 y83,880,17 l142,815,17 y137,955,17 y242,887,43 y329,869,33 o409,877,33 y485,912,36 s313,965,44 s413,968,38 t527,1028 s215,1035 y626,1004,14 a600,878,14 o696,913,14 r771,931 l763,1047 k888,1023 p1003,1029 s1118,973 l1222,993 y1320,993 o1414,1032 p33,1013 y835,741,20 o920,753,20 l807,826,20 y949,836,20 a875,889,20');
D.edges('18,88 133,75;319,104 346,219;346,219 446,167 389,295;454,379 506,313;384,442 506,313;454,379 596,350 506,313;454,379 580,418 498,493 454,379;384,442 333,733;180,427 137,533 254,513 180,427;487,12 580,78;707,119 784,200;707,119 712,243;864,166 941,247 833,292 864,166;939,32 990,138;1182,285 1087,338 1180,408 1182,285;923,354 1027,400;843,462 955,470 1051,511 1018,600 914,564 843,462;955,470 914,564;955,470 1018,600;1051,511 914,564;914,564 966,670;1367,530 1294,619;767,633 698,726;1168,603 1115,706;583,541 658,585 601,675 500,620 583,541;583,541 601,675;658,585 500,620;500,620 319,632 205,599 160,691 319,632;160,691 47,731;418,641 414,764;1134,832 1041,893;1343,831 1240,873;600,878 696,913 626,1004 600,878;771,931 763,1047;888,1023 869,1139;1118,973 1162,1085;485,912 527,1028;242,887 83,880 142,815 137,955 83,880;142,815 242,887;137,955 242,887;313,965 215,1035;313,965 275,1085;313,965 343,1095;413,968 343,1095;413,968 426,1085;313,965 426,1085');
D.clique('346,219 449,261 300,303 389,295 326,373 454,379 384,442');
D.clique('143,205 49,264 178,297 91,351');
D.clique('835,741 920,753 949,836 875,889 807,826');
D.clique('333,733 414,764 282,802 472,826 242,887 329,869 409,877 485,912 313,965 413,968');

E.nodes('r135,38 y336,66 l457,59 p548,20 r189,136 o290,171 y385,204 l489,181 r614,129 r672,230 p737,142 o844,120 l959,139 k1115,158 p1248,77 q1368,65 k1383,181 p1537,52,17 l1497,164,14 r248,282 s403,321 l539,279 p840,252 p953,255 p1069,248 p1243,205 p1234,322 p1121,332 y1340,293 y1434,361 s1518,285,14 r317,383 l530,383 y704,323,14 y821,346,14 y740,436,14 s995,394 o1106,435 p1254,428 o389,473 y491,491 l628,441 l852,454 l956,507 y1404,452 p1322,533 p1460,551 l617,548 l746,578 l867,568 l1063,547 y1192,541 y1254,643 l1383,640 r484,608 o597,653 r765,685 y895,675 y1020,652 y1138,663 r1451,703 r651,735 r736,815 s841,794 y949,791 y1059,758 l1322,756 y1178,802,14 y1093,884,14 y1207,921,14 t1283,859 r1395,880 r892,899 y1000,947 y1466,957 s1130,1005 r1260,1040 s1369,1031 o1476,1070 r1506,808,17 l747,5 q863,2');
E.edges('747,5 863,2;614,129 672,230;844,120 959,139;953,255 1069,248;1243,205 1234,322;1340,293 1434,361;1368,65 1383,181;995,394 1106,435;704,323 821,346 740,436 704,323;852,454 956,507;1404,452 1322,533;1192,541 1254,643;1020,652 1138,663;651,735 736,815;949,791 1059,758;1178,802 1093,884 1207,921 1178,802;1283,859 1395,880;1537,52 1497,164');
abs([[642.3,1057.3],[680.9,1059.7]]);
abs([[629,1094.7],[667.2,1090],[642.3,1057.3]]);
abs([[636,1135],[674.9,1125.7],[665.1,1162],[636,1135]]);
abs([[613.7,1274.3],[652.8,1279],[681.2,1302],[660.9,1326.7],[652.8,1279]]);
abs([[632,1309.3],[652.8,1279]]);
abs([[632,1309.3],[681.2,1302]]);
abs([[632,1309.3],[660.9,1326.7]]);

F.nodes('t275,5 t343,15,17 s426,5,17 a1162,5 y88,59 t190,116 p246,213 k648,54 k543,101 p783,116 k702,158 p877,174 y869,59 k342,204 k589,203 y687,263 o71,257,15 s43,366,15 r175,289 s248,378,14 a152,430 o404,278,14 a327,364,14 y429,399,14 p499,273,14 p602,324,14 p520,396,14 y49,150,14 p16,454 l680,405 p799,298 l908,269 l976,346 y1071,290 o1185,288 s1307,250 r1285,356 s1083,414 s1205,425 r1147,509 y996,488 y889,421 a879,537 y785,440 l704,521 p363,503 p483,540 p588,503 p137,530 p269,560 p8,554 p360,619 l598,630 l775,594 y878,658 r990,607 r1096,611 r978,722 s787,742 o639,770 y699,684 l517,692 l412,697 l267,723 l188,627 l94,682 r8,717,17 r89,786,17 r31,860,17 l196,819 l356,806 y490,800 s577,868 r755,867 r874,807 l242,907 y354,919 o459,908 r663,926 r535,989 l34,961 y136,987 o276,1023 r391,1034 y24,1068 r175,1081 r1026,173,15 r969,75,15 r1078,66,15 l1135,168 y1240,145 r1374,165 o1286,45 r1402,56');
F.edges('648,54 543,101;190,116 246,213;589,203 687,263;1078,66 969,75 1026,173 1078,66;175,289 248,378 152,430;404,278 327,364 429,399 404,278;499,273 602,324 520,396 499,273;785,440 704,521;889,421 879,537;188,627 94,682;343,15 426,5');

lines.forEach(function (l) {
  var e = document.createElementNS(NS, 'line');
  e.setAttribute('class', 'link');
  e.setAttribute('x1', l[0][0].toFixed(1)); e.setAttribute('y1', l[0][1].toFixed(1));
  e.setAttribute('x2', l[1][0].toFixed(1)); e.setAttribute('y2', l[1][1].toFixed(1));
  svg.appendChild(e);
});
dots.forEach(function (d) {
  var c = document.createElementNS(NS, 'circle');
  c.setAttribute('class', 'node');
  c.setAttribute('cx', d[0].toFixed(1)); c.setAttribute('cy', d[1].toFixed(1));
  c.setAttribute('r', d[2].toFixed(1)); c.setAttribute('fill', d[3]);
  svg.appendChild(c);
});
```
